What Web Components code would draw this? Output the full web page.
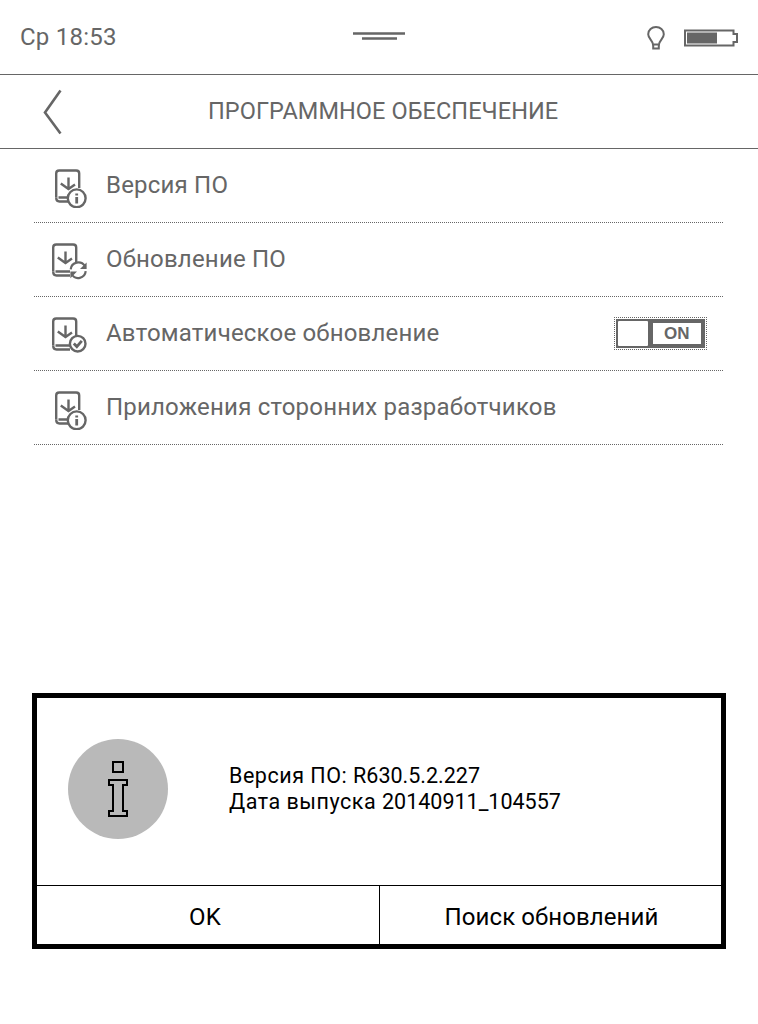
<!DOCTYPE html>
<html lang="ru">
<head>
<meta charset="utf-8">
<title>Программное обеспечение</title>
<style>
  html, body { margin: 0; background: #fff; }
  body { font-family: Roboto, "Liberation Sans", sans-serif; }
</style>
</head>
<body>
<settings-page>
  <status-bar time="Ср 18:53"></status-bar>
  <page-header title="ПРОГРАММНОЕ ОБЕСПЕЧЕНИЕ"></page-header>
  <menu-list>
    <menu-row icon="info" shift="3">Версия ПО</menu-row>
    <menu-row icon="refresh">Обновление ПО</menu-row>
    <menu-row icon="check">Автоматическое обновление<on-toggle slot="end"></on-toggle></menu-row>
    <menu-row icon="info" shift="3">Приложения сторонних разработчиков</menu-row>
  </menu-list>
  <info-dialog slot="dialog">
    <info-line label="Версия ПО:" value="R630.5.2.227"></info-line>
    <info-line label="Дата выпуска" value="20140911_104557"></info-line>
    <dialog-button slot="buttons">OK</dialog-button>
    <dialog-button slot="buttons">Поиск обновлений</dialog-button>
  </info-dialog>
</settings-page>

<script>
class SettingsPage extends HTMLElement {
  constructor() {
    super();
    this.attachShadow({ mode: 'open' });
    this.shadowRoot.innerHTML = `
      <style>
        :host { display: flex; flex-direction: column; width: 758px; height: 1024px; overflow: hidden; background: #fff; }
        .dialog { display: block; margin-top: auto; margin-bottom: 75px; padding: 0 32px; }
      </style>
      <slot></slot>
      <div class="dialog"><slot name="dialog"></slot></div>
    `;
  }
}
customElements.define('settings-page', SettingsPage);

class StatusBar extends HTMLElement {
  constructor() {
    super();
    this.attachShadow({ mode: 'open' });
  }
  connectedCallback() {
    this.shadowRoot.innerHTML = `
      <style>
        :host { display: grid; grid-template-columns: 1fr auto 1fr; align-items: center; height: 74px; border-bottom: 1px solid #666; color: #666; padding: 0 20px; width: 718px; }
        .time { font-size: 24px; letter-spacing: 0.25px; line-height: 74px; }
        .right { display: flex; justify-content: flex-end; align-items: center; gap: 19px; padding-top: 2px; }
        svg { display: block; }
      </style>
      <div class="time">${this.getAttribute('time')}</div>
      <svg width="52" height="10" viewBox="0 0 52 10"><path d="M0 1.5H52M9 6.5H44" stroke="#666" stroke-width="2.6" fill="none"/></svg>
      <div class="right">
        <svg width="18" height="24" viewBox="0 0 18 24" fill="none" stroke="#666" stroke-width="2">
          <path d="M6 18.5C5.6 14.5 1.2 12.5 1.2 8.2C1.2 4 4.8 1 9 1C13.2 1 16.8 4 16.8 8.2C16.8 12.5 12.4 14.5 12 18.5Z"/>
          <path d="M6.2 18.5V22.5H11.8V18.5"/>
        </svg>
        <svg width="54" height="18" viewBox="0 0 54 18" fill="none">
          <path d="M1 1.5H49.5V5H53V13H49.5V16.5H1Z" stroke="#666" stroke-width="2"/>
          <rect x="3" y="3.5" width="30" height="11" fill="#666"/>
        </svg>
      </div>
    `;
  }
}
customElements.define('status-bar', StatusBar);

class PageHeader extends HTMLElement {
  constructor() {
    super();
    this.attachShadow({ mode: 'open' });
  }
  connectedCallback() {
    this.shadowRoot.innerHTML = `
      <style>
        :host { display: flex; align-items: center; height: 73px; border-bottom: 1px solid #666; color: #666; }
        svg { display: block; flex: none; margin-left: 43px; }
        h1 { margin: 0 0 0 146px; font-size: 23.5px; letter-spacing: 0.07px; font-weight: 400; white-space: nowrap; line-height: 73px; }
      </style>
      <svg width="19" height="46" viewBox="0 0 19 46" fill="none"><path d="M17.5 1.5L2 23.5L17.5 44.5" stroke="#666" stroke-width="2.6"/></svg>
      <h1>${this.getAttribute('title')}</h1>
    `;
  }
}
customElements.define('page-header', PageHeader);

class MenuList extends HTMLElement {
  constructor() {
    super();
    this.attachShadow({ mode: 'open' });
    this.shadowRoot.innerHTML = `
      <style>
        :host { display: block; margin: 0 35px 0 34px; }
      </style>
      <slot></slot>
    `;
  }
}
customElements.define('menu-list', MenuList);

const badges = {
  info: `<circle cx="23.7" cy="34.3" r="8.9" fill="#fff"/>
         <path d="M23.7 29.4V31.6M23.7 33V39.4" stroke-width="2.8"/>`,
  refresh: `<path d="M20.7 31.3C21.5 24 31 22 35 28.2M35.7 33.2C35 40.5 25.5 42.5 21.7 36.3" stroke-width="2.2"/>
            <path d="M36.6 24.5V31H30Z" fill="#666" stroke="none"/>
            <path d="M20.4 40.2V33.6H27Z" fill="#666" stroke="none"/>`,
  check: `<circle cx="27.7" cy="31.7" r="7.8" fill="#fff"/>
          <path d="M23.8 31.6L26.8 34.6L31.8 28.8" stroke-width="2.8"/>`
};

class MenuRow extends HTMLElement {
  constructor() {
    super();
    this.attachShadow({ mode: 'open' });
  }
  connectedCallback() {
    const icon = this.getAttribute('icon');
    const shift = Number(this.getAttribute('shift') || 0);
    this.shadowRoot.innerHTML = `
      <style>
        :host { display: flex; align-items: center; height: 73px; border-bottom: 1px dotted #666; color: #666; font-size: 24px; letter-spacing: 0.2px; }
        svg { display: block; flex: none; width: 40px; height: 44px; margin-left: 16px; margin-right: 16px; }
        .label { flex: 1; white-space: nowrap; padding-bottom: 2px; }
        ::slotted(on-toggle) { margin-right: 16px; }
      </style>
      <svg viewBox="0 0 40 44" fill="none" stroke="#666" stroke-width="2.4">
        <g transform="translate(${shift} 0)">
          <path d="M3.2 33.5V9.5C3.2 7.5 4.5 6.5 6.2 6.5H23.2C25 6.5 26.2 7.5 26.2 9.5V24"/>
          <path d="M3.2 33.5C3.2 36 4.5 37.5 6.5 37.5H20M5.5 33.5H20"/>
          <path d="M15.5 13.5V24.5M7.8 19.5L15.5 25L22 20.5"/>
          ${icon === 'info' ? badges.info : ''}
        </g>
        ${icon === 'info' ? '' : badges[icon]}
      </svg>
      <span class="label"><slot></slot></span>
      <slot name="end"></slot>
    `;
  }
}
customElements.define('menu-row', MenuRow);

class OnToggle extends HTMLElement {
  constructor() {
    super();
    this.attachShadow({ mode: 'open' });
    this.shadowRoot.innerHTML = `
      <style>
        :host { display: block; flex: none; border: 1px dotted #666; padding: 1px; letter-spacing: 0; }
        .track { display: flex; width: 89px; height: 29px; box-sizing: border-box; background: #666; padding: 2px 4px 2px 2px; }
        .knob { width: 30px; height: 25px; background: #fff; border-radius: 1px; }
        .on { width: 49px; height: 21px; margin: 2px 0 0 5px; background: #fff; color: #666; text-align: center;
              font: 700 17px/21px "Liberation Sans", sans-serif; }
      </style>
      <div class="track"><div class="knob"></div><div class="on">ON</div></div>
    `;
  }
}
customElements.define('on-toggle', OnToggle);

class InfoDialog extends HTMLElement {
  constructor() {
    super();
    this.attachShadow({ mode: 'open' });
    this.shadowRoot.innerHTML = `
      <style>
        :host { display: block; border: 5px solid #000; background: #fff; color: #000; }
        .body { display: flex; height: 187px; border-bottom: 1px solid #000; }
        svg { display: block; flex: none; margin: 41px 61px 0 31px; }
        .text { display: flex; flex-direction: column; padding-top: 65px; font-size: 21.5px; line-height: 26px; }
        .buttons { display: grid; grid-template-columns: 343px 1fr; height: 58px; }
      </style>
      <div class="body">
        <svg width="100" height="100" viewBox="0 0 100 100">
          <circle cx="50" cy="50" r="50" fill="#b9b9b9"/>
          <g fill="none" stroke="#000" stroke-width="2">
            <rect x="45" y="23" width="10" height="10"/>
            <path d="M41 41H59V46H55V72H59V77H41V72H45V46H41Z"/>
          </g>
        </svg>
        <div class="text"><slot></slot></div>
      </div>
      <div class="buttons"><slot name="buttons"></slot></div>
    `;
  }
}
customElements.define('info-dialog', InfoDialog);

class InfoLine extends HTMLElement {
  constructor() {
    super();
    this.attachShadow({ mode: 'open' });
  }
  connectedCallback() {
    this.shadowRoot.innerHTML = `
      <style>
        :host { display: block; white-space: nowrap; }
        .label { letter-spacing: 0.52px; }
      </style>
      <span class="label">${this.getAttribute('label')} </span>${this.getAttribute('value')}
    `;
  }
}
customElements.define('info-line', InfoLine);

class DialogButton extends HTMLElement {
  constructor() {
    super();
    this.attachShadow({ mode: 'open' });
    this.shadowRoot.innerHTML = `
      <style>
        :host { display: flex; align-items: center; justify-content: center; padding: 3px 0 0 2px; font-size: 24px; letter-spacing: 0.1px; color: #000; }
        :host(:not(:last-child)) { border-right: 1px solid #000; padding-left: 0; padding-right: 6px; }
      </style>
      <slot></slot>
    `;
  }
}
customElements.define('dialog-button', DialogButton);
</script>
</body>
</html>
